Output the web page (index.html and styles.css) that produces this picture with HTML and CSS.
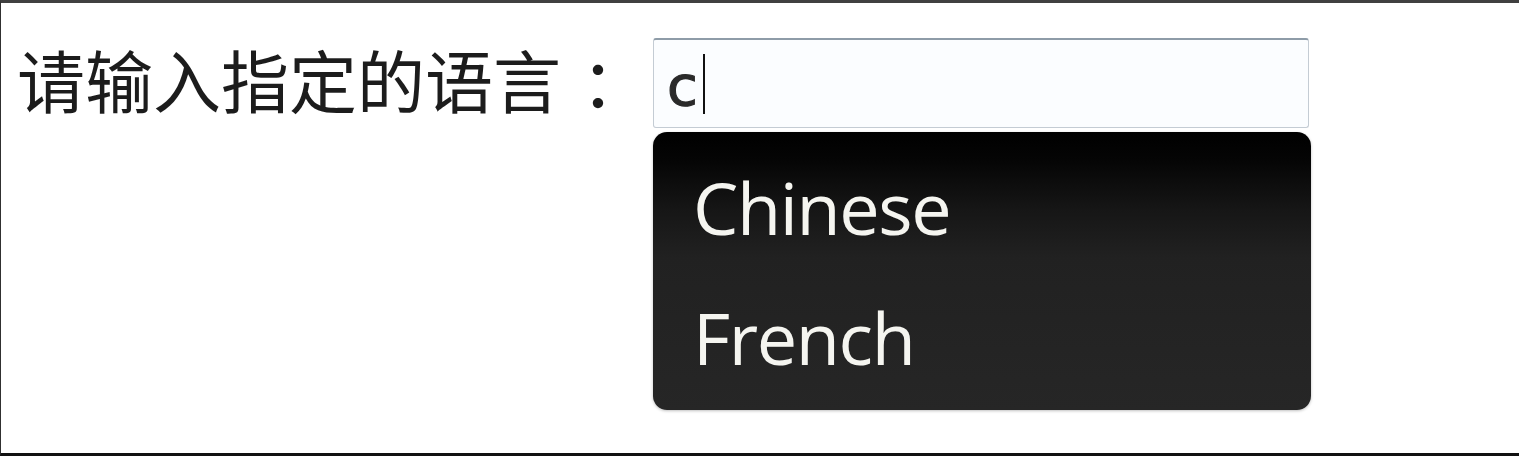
FILE: index.html
```html
<!DOCTYPE html>
<html lang="zh-CN">
<head>
<meta charset="utf-8">
<title>语言</title>
<link rel="stylesheet" href="styles.css">
</head>
<body>
<div class="frame">
  <div class="row">
    <label class="label">请输入指定的语言<span class="colon">：</span></label>
    <div class="combo">
      <div class="field" role="textbox"><span class="value">c</span><span class="caret"></span></div>
      <ul class="menu">
        <li class="item">Chinese</li>
        <li class="item">French</li>
      </ul>
    </div>
  </div>
</div>
</body>
</html>
```
FILE: styles.css
```css
html, body {
  margin: 0;
  padding: 0;
  background: #ffffff;
}
.frame {
  box-sizing: border-box;
  width: 1519px;
  height: 456px;
  border-top: 3px solid #404040;
  border-left: 1px solid #303030;
  border-bottom: 3px solid #111111;
  padding: 35px 0 0 16px;
  background: #ffffff;
}
.row {
  display: flex;
  align-items: flex-start;
}
.label {
  font-family: "Noto Sans CJK SC", sans-serif;
  font-size: 68px;
  line-height: 82px;
  color: #1c1c1c;
  margin-right: 4px;
  white-space: nowrap;
}
.colon {
  padding-left: 20px;
}
.combo {
  display: flex;
  flex-direction: column;
  gap: 4px;
}
.field {
  box-sizing: border-box;
  width: 656px;
  height: 90px;
  border: 1px solid #c4ccd4;
  border-top: 2px solid #8e9ca8;
  border-radius: 3px;
  background: #fbfdff;
  display: flex;
  align-items: center;
  padding-left: 13px;
}
.value {
  font-family: "DejaVu Sans", sans-serif;
  font-size: 56px;
  color: #2a2a2a;
  line-height: 1;
  position: relative;
  top: 2px;
  -webkit-text-stroke: 1.2px #2a2a2a;
}
.caret {
  width: 2px;
  height: 60px;
  background: #111;
  margin-left: 5px;
  margin-top: 1px;
}
.menu {
  box-sizing: border-box;
  list-style: none;
  margin: 0;
  width: 658px;
  height: 278px;
  padding: 10px 0 8px 40px;
  border-radius: 14px;
  background: linear-gradient(to bottom, #000000 0%, #050505 10%, #161616 28%, #212121 45%, #262626 100%);
  box-shadow: 0 1px 3px rgba(0,0,0,0.25);
}
.item {
  font-family: "Open Sans", sans-serif;
  font-size: 72px;
  line-height: 130px;
  letter-spacing: -1.4px;
  color: #f5f5f0;
}
```
